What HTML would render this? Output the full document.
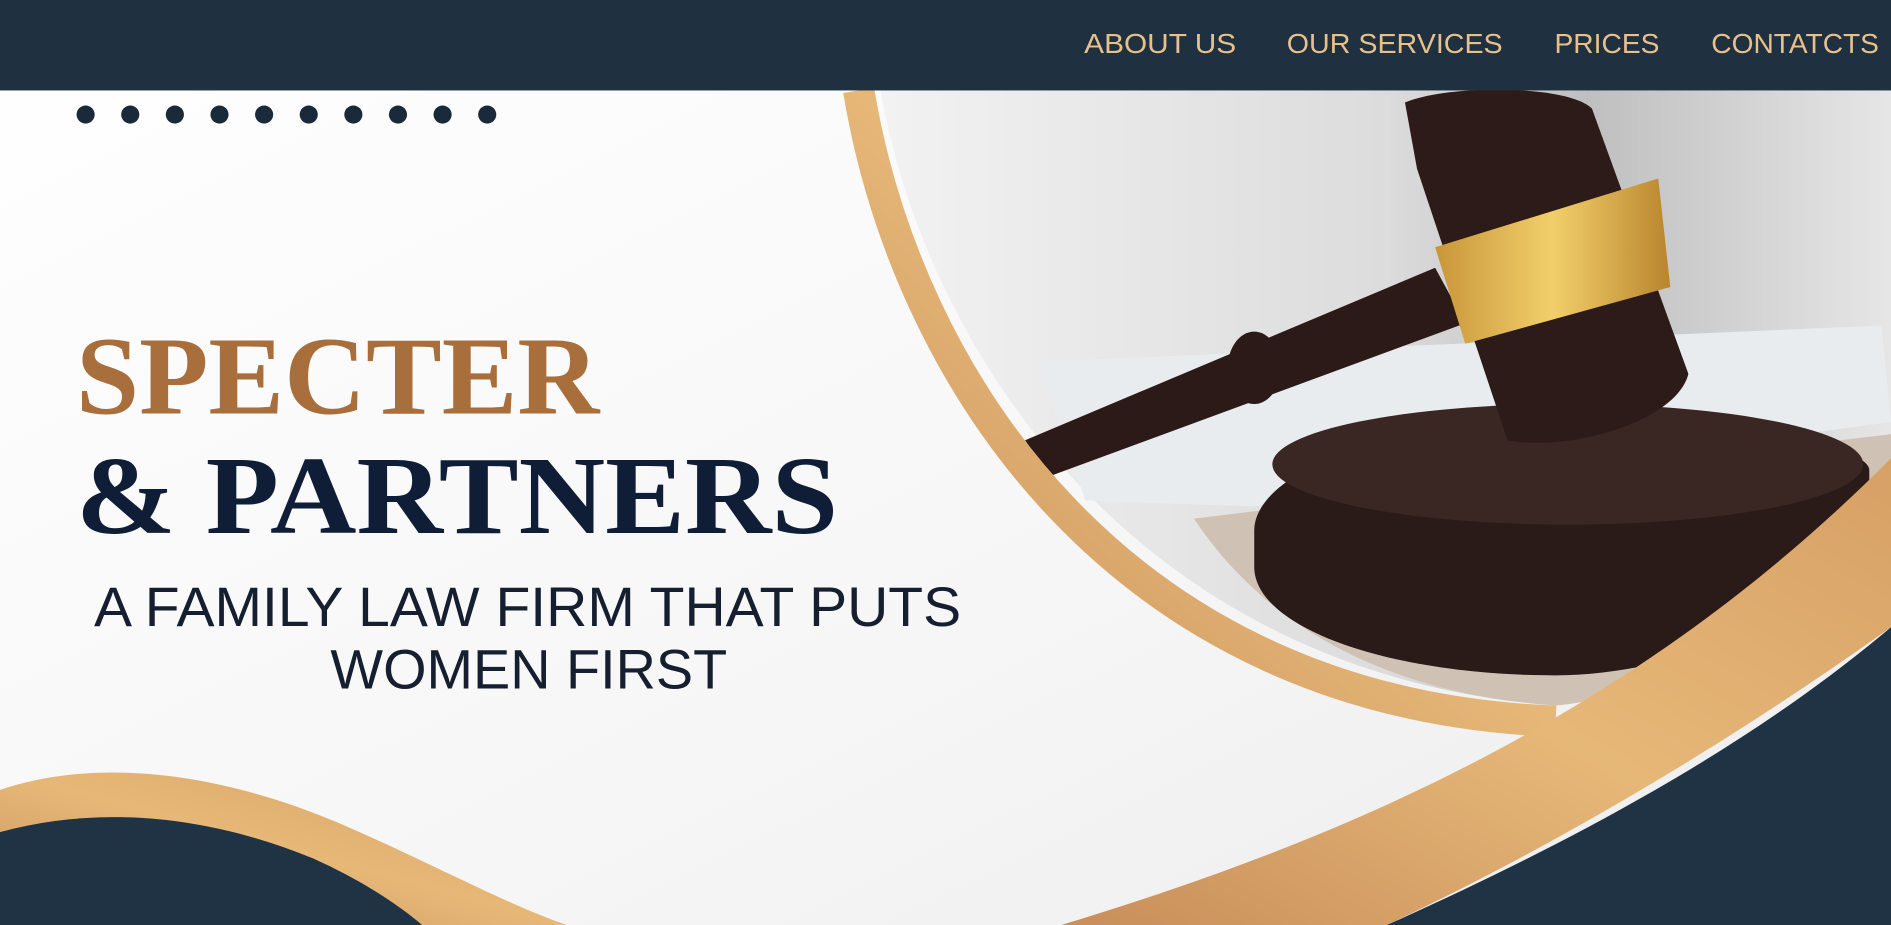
<!DOCTYPE html>
<html><head><meta charset="utf-8"><style>
html,body{margin:0;padding:0;width:1891px;height:925px;overflow:hidden;background:#fff}
svg{display:block}
</style></head><body>
<svg width="1891" height="925" viewBox="0 0 1568 767" xmlns="http://www.w3.org/2000/svg">
<defs>
<linearGradient id="bg" x1="0" y1="0" x2="1" y2="1"><stop offset="0" stop-color="#ffffff"/><stop offset="0.6" stop-color="#f6f6f6"/><stop offset="1" stop-color="#ececec"/></linearGradient>
<linearGradient id="ph" x1="0" y1="0" x2="1" y2="0"><stop offset="0" stop-color="#f2f2f2"/><stop offset="0.5" stop-color="#dcdcdc"/><stop offset="0.7" stop-color="#bfbfbf"/><stop offset="1" stop-color="#e6e6e6"/></linearGradient>
<linearGradient id="gold" x1="0" y1="1" x2="1" y2="0"><stop offset="0" stop-color="#c98e5a"/><stop offset="0.5" stop-color="#e6b878"/><stop offset="1" stop-color="#d7a065"/></linearGradient>
<linearGradient id="band" x1="0" y1="0" x2="1" y2="0"><stop offset="0" stop-color="#c8963a"/><stop offset="0.5" stop-color="#f2cf6a"/><stop offset="1" stop-color="#b9852e"/></linearGradient>
</defs>
<rect width="1568" height="767" fill="url(#bg)"/>
<path d="M730,75 C770,300 950,560 1290,585 C1400,560 1500,470 1568,390 L1568,75 Z" fill="url(#ph)"/>
<path d="M860,300 L1560,270 L1568,350 L1040,420 L900,415 Z" fill="#e9ecef"/>
<path d="M990,430 L1568,360 L1568,440 C1450,540 1350,580 1290,585 C1150,575 1050,520 990,430 Z" fill="#cfc2b4"/>
<path d="M1040,440 C1040,390 1160,345 1300,345 C1440,345 1550,370 1550,390 L1550,440 C1500,520 1380,560 1290,560 C1150,560 1040,520 1040,470 Z" fill="#2a1a18"/>
<ellipse cx="1300" cy="385" rx="245" ry="50" fill="#3a2622"/>
<path d="M850,365 L1190,222 L1215,268 L870,395 Z" fill="#2b1a18"/>
<ellipse cx="1040" cy="305" rx="22" ry="30" fill="#2b1a18"/>
<path d="M1165,85 C1200,70 1300,70 1320,90 L1400,310 C1390,350 1300,375 1250,365 L1175,140 Z" fill="#2c1b19"/>
<path d="M1190,205 L1375,148 L1385,238 L1215,285 Z" fill="url(#band)"/>
<path d="M712,75 C752,315 930,585 1290,598" fill="none" stroke="url(#gold)" stroke-width="26"/>
<path d="M880,767 C1100,700 1350,600 1568,380 L1568,520 C1400,640 1250,720 1150,767 Z" fill="url(#gold)"/>
<path d="M1150,767 C1300,700 1450,620 1568,520 L1568,767 Z" fill="#1f3344"/>
<path d="M0,655 C80,628 180,640 280,682 C350,712 420,750 470,767 L0,767 Z" fill="url(#gold)"/>
<path d="M0,690 C80,668 170,675 260,712 C300,730 330,750 350,767 L0,767 Z" fill="#1f3344"/>
<rect width="1568" height="75" fill="#1f3040"/>
<g font-family="Liberation Sans, sans-serif" font-size="23" fill="#e8c08a">
<text x="899" y="44" textLength="126" lengthAdjust="spacingAndGlyphs">ABOUT US</text>
<text x="1067" y="44" textLength="179" lengthAdjust="spacingAndGlyphs">OUR SERVICES</text>
<text x="1289" y="44" textLength="87" lengthAdjust="spacingAndGlyphs">PRICES</text>
<text x="1419" y="44" textLength="139" lengthAdjust="spacingAndGlyphs">CONTATCTS</text>
</g>
<g fill="#1a2a3a">
<circle cx="71" cy="95" r="7.5"/><circle cx="108" cy="95" r="7.5"/><circle cx="145" cy="95" r="7.5"/><circle cx="182" cy="95" r="7.5"/><circle cx="219" cy="95" r="7.5"/><circle cx="256" cy="95" r="7.5"/><circle cx="293" cy="95" r="7.5"/><circle cx="330" cy="95" r="7.5"/><circle cx="367" cy="95" r="7.5"/><circle cx="404" cy="95" r="7.5"/>
</g>
<text x="63" y="343" font-family="Liberation Serif, serif" font-weight="bold" font-size="92" fill="#a86e3c" textLength="434" lengthAdjust="spacingAndGlyphs">SPECTER</text>
<text x="63" y="442" font-family="Liberation Serif, serif" font-weight="bold" font-size="92" fill="#0f1d36" textLength="632" lengthAdjust="spacingAndGlyphs">&amp; PARTNERS</text>
<g font-family="Liberation Sans, sans-serif" font-size="46" fill="#151f30">
<text x="78" y="519" textLength="719" lengthAdjust="spacingAndGlyphs">A FAMILY LAW FIRM THAT PUTS</text>
<text x="274" y="571" textLength="329" lengthAdjust="spacingAndGlyphs">WOMEN FIRST</text>
</g>
</svg>
</body></html>
